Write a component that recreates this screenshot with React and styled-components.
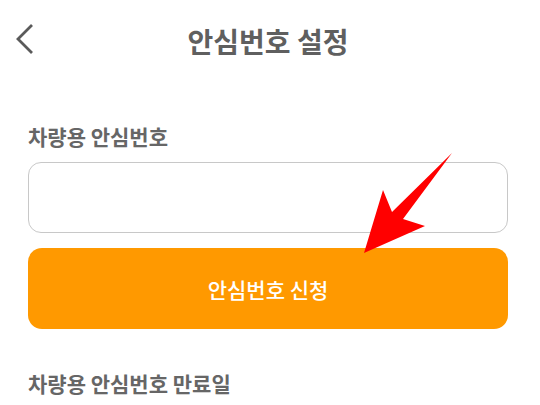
import React from "react";
import styled, { createGlobalStyle } from "styled-components";

const GlobalStyle = createGlobalStyle`
  body {
    margin: 0;
    background: #ffffff;
    font-family: "Noto Sans CJK KR", "Noto Sans", sans-serif;
  }
`;

export default function App() {
  return (
    <>
      <GlobalStyle />
      <Screen>
        <Header>
          <BackButton aria-label="뒤로">
            <svg width="20" height="32" viewBox="0 0 20 32">
              <polyline
                points="17,2 3,16 17,30"
                fill="none"
                stroke="#5a5a5a"
                strokeWidth="2.8"
              />
            </svg>
          </BackButton>
          <Title>안심번호 설정</Title>
        </Header>
        <Content>
          <Label>차량용 안심번호</Label>
          <NumberInput type="text" />
          <SubmitButton>안심번호 신청</SubmitButton>
          <Label $top={40}>차량용 안심번호 만료일</Label>
        </Content>
        <Pointer width="540" height="405" viewBox="0 0 540 405">
          <polygon
            points="452,153 403,219 425,226 364,253 383,190 392,212"
            fill="#ff0000"
          />
        </Pointer>
      </Screen>
    </>
  );
}

const Screen = styled.div`
  position: relative;
  width: 540px;
  height: 405px;
  overflow: hidden;
`;

const Header = styled.div`
  position: relative;
  height: 81px;
  padding-left: 28px;
  width: 480px;
  display: flex;
  align-items: center;
  justify-content: center;
`;

const BackButton = styled.button`
  position: absolute;
  left: 15px;
  top: 23px;
  border: none;
  background: none;
  padding: 0;
  display: flex;
`;

const Title = styled.h1`
  margin: 0;
  font-size: 28px;
  font-weight: 700;
  color: #5f5f5f;
  line-height: 1;
`;

const Content = styled.div`
  padding: 0 0 0 28px;
  width: 480px;
  display: flex;
  flex-direction: column;
`;

const Label = styled.div`
  margin-top: ${(p) => p.$top || 41}px;
  font-size: 21px;
  font-weight: 700;
  line-height: 28px;
  color: #666666;
`;

const NumberInput = styled.input`
  margin-top: 12px;
  height: 71px;
  box-sizing: border-box;
  border: 1.5px solid #c8c8c8;
  border-radius: 13px;
  outline: none;
  padding: 0 16px;
  font-size: 19px;
  font-family: inherit;
`;

const SubmitButton = styled.button`
  margin-top: 15px;
  height: 81px;
  border: none;
  border-radius: 14px;
  background: #ff9900;
  color: #ffffff;
  font-family: inherit;
  font-size: 21px;
  font-weight: 500;
`;

const Pointer = styled.svg`
  position: absolute;
  left: 0;
  top: 0;
  pointer-events: none;
`;
